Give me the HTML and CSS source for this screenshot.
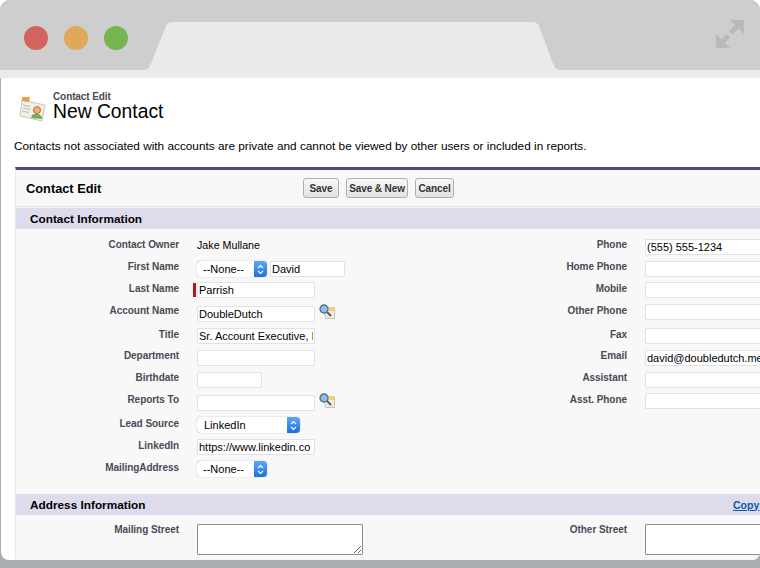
FILE: index.html
```html
<!DOCTYPE html>
<html lang="en">
    <head>
        <meta charset="UTF-8">
        <title>New Contact</title>
        <link rel="stylesheet" href="styles.css">
    </head>
    <body>
        <div class="window">
            <div class="chrome">
                <span class="dot dot-red"></span>
                <span class="dot dot-yellow"></span>
                <span class="dot dot-green"></span>
                <svg class="tab" width="418" height="48" viewBox="0 0 418 48">
                    <path d="M0 48Q5 48 7 44L23 4Q25 0 29 0L390 0Q394 0 396 4L411 44Q413 48 418 48Z" fill="#eaeaea"/>
                </svg>
                <svg class="expand" width="28" height="28" viewBox="0 0 28 28">
                    <path d="M14 0H28V14Z M0 14V28H14Z" fill="#b9b9b9"/>
                    <path d="M14.500 13L22 6M7 21L12.500 16" stroke="#b9b9b9" stroke-width="5"/>
                </svg>
            </div>
            <div class="strip"></div>
            <div class="page">
                <div class="page-title">
                    <svg class="contact-icon" width="28" height="28" viewBox="0 0 28 28">
                        <path d="M3 5L26 10L23 26L1 21Z" fill="#f1efe6" stroke="#c9c7bc"/>
                        <path d="M3 2L11 2L10 7L3 6Z" fill="#ee9a50"/>
                        <path d="M4 10L11 11.500M4 13L11 14.500M3 16L10 17.500" stroke="#b9bcc4"/>
                        <circle cx="18" cy="15" r="3.500" fill="#e9b27f" stroke="#c9682f"/>
                        <path d="M12 23Q13 18 18 19Q23 19 23 24Z" fill="#6fae5a"/>
                    </svg>
                    <div>
                        <h2>Contact Edit</h2>
                        <h1>New Contact</h1>
                    </div>
                </div>
                <p class="note">Contacts not associated with accounts are private and cannot be viewed by other users or included in reports.</p>

                <div class="panel">
                    <div class="panel-head">
                        <h3>Contact Edit</h3>
                        <div class="buttons">
                            <button class="btn-save">Save</button>
                            <button class="btn-new">Save &amp; New</button>
                            <button class="btn-cancel">Cancel</button>
                        </div>
                    </div>

                    <div class="section-bar"><h4>Contact Information</h4></div>
                    <div class="rows">
                        <div class="row row-low">
                            <label>Contact Owner</label>
                            <span class="plain">Jake Mullane</span>
                            <label>Phone</label>
                            <input class="w-full" type="text" value="(555) 555-1234">
                        </div>
                        <div class="row row-low">
                            <label>First Name</label>
                            <div class="field-group">
                                <div class="select w-salutation"><span>--None--</span><i class="stepper"><svg width="7" height="11" viewBox="0 0 7 11"><path d="M1 4L3.500 1.500L6 4M1 7L3.500 9.500L6 7" fill="none" stroke="#fff" stroke-width="1.200"/></svg></i></div>
                                <input class="w-first" type="text" value="David">
                            </div>
                            <label>Home Phone</label>
                            <input class="w-full" type="text">
                        </div>
                        <div class="row">
                            <label>Last Name</label>
                            <div class="required"><input class="w-text" type="text" value="Parrish"></div>
                            <label>Mobile</label>
                            <input class="w-full" type="text">
                        </div>
                        <div class="row row-lookup">
                            <label>Account Name</label>
                            <div class="field-group">
                                <input class="w-text" type="text" value="DoubleDutch">
                                <svg class="lookup" width="16" height="16" viewBox="0 0 16 16">
                                    <path d="M5.500 3.500H15.500V14.500H6.500Z" fill="#ecebe4" stroke="#c5c5bd"/>
                                    <path d="M10 3H15V7H10Z" fill="#f6d463"/>
                                    <path d="M7.500 7.500L12 12" stroke="#5f5b50" stroke-width="2"/>
                                    <circle cx="5" cy="5" r="4" fill="#8fbfe2" stroke="#4f6f8c" stroke-width="1.300"/>
                                </svg>
                            </div>
                            <label>Other Phone</label>
                            <input class="w-full shift-up" type="text">
                        </div>
                        <div class="row row-short">
                            <label>Title</label>
                            <input class="w-text" type="text" value="Sr. Account Executive, I">
                            <label>Fax</label>
                            <input class="w-full" type="text">
                        </div>
                        <div class="row row-low">
                            <label>Department</label>
                            <input class="w-text" type="text">
                            <label>Email</label>
                            <input class="w-full" type="text" value="david@doubledutch.me">
                        </div>
                        <div class="row row-low">
                            <label>Birthdate</label>
                            <input class="w-date" type="text">
                            <label>Assistant</label>
                            <input class="w-full" type="text">
                        </div>
                        <div class="row row-lookup">
                            <label>Reports To</label>
                            <div class="field-group">
                                <input class="w-text" type="text">
                                <svg class="lookup" width="16" height="16" viewBox="0 0 16 16">
                                    <path d="M5.500 3.500H15.500V14.500H6.500Z" fill="#ecebe4" stroke="#c5c5bd"/>
                                    <path d="M10 3H15V7H10Z" fill="#f6d463"/>
                                    <path d="M7.500 7.500L12 12" stroke="#5f5b50" stroke-width="2"/>
                                    <circle cx="5" cy="5" r="4" fill="#8fbfe2" stroke="#4f6f8c" stroke-width="1.300"/>
                                </svg>
                            </div>
                            <label>Asst. Phone</label>
                            <input class="w-full shift-up" type="text">
                        </div>
                        <div class="row">
                            <label>Lead Source</label>
                            <div class="select w-source"><span>LinkedIn</span><i class="stepper"><svg width="7" height="11" viewBox="0 0 7 11"><path d="M1 4L3.500 1.500L6 4M1 7L3.500 9.500L6 7" fill="none" stroke="#fff" stroke-width="1.200"/></svg></i></div>
                        </div>
                        <div class="row">
                            <label>LinkedIn</label>
                            <input class="w-text" type="text" value="https://www.linkedin.co">
                        </div>
                        <div class="row">
                            <label>MailingAddress</label>
                            <div class="select w-salutation"><span>--None--</span><i class="stepper"><svg width="7" height="11" viewBox="0 0 7 11"><path d="M1 4L3.500 1.500L6 4M1 7L3.500 9.500L6 7" fill="none" stroke="#fff" stroke-width="1.200"/></svg></i></div>
                        </div>
                    </div>

                    <div class="section-bar">
                        <h4>Address Information</h4>
                        <a href="#">Copy</a>
                    </div>
                    <div class="rows rows-address">
                        <div class="row row-street">
                            <label>Mailing Street</label>
                            <textarea></textarea>
                            <label>Other Street</label>
                            <textarea></textarea>
                        </div>
                    </div>
                </div>
            </div>
        </div>
    </body>
</html>
```

FILE: styles.css
```css
* {
    box-sizing: border-box;
    margin: 0;
}

html, body {
    width: 760px;
    height: 568px;
    overflow: hidden;
    background-color: #fff;
}

body {
    font-family: "Liberation Sans", Arial, sans-serif;
    color: #000;
}

.window {
    width: 760px;
    height: 568px;
    background-color: #aaadb0;
    border-radius: 10px 10px 0 0;
    overflow: hidden;
    display: flex;
    flex-direction: column;
}

/* browser frame */
.chrome {
    height: 70px;
    flex: none;
    background-color: #cecece;
    padding: 6px 16px 0 24px;
    display: flex;
    align-items: center;
}

.dot {
    width: 24px;
    height: 24px;
    border-radius: 50%;
    margin-right: 16px;
}

.dot-red { background-color: #d4635f; }
.dot-yellow { background-color: #dfa95a; }
.dot-green { background-color: #76b552; }

.tab {
    align-self: flex-end;
    margin-left: -1px;
}

.expand {
    align-self: flex-start;
    margin-left: auto;
    margin-top: 14px;
}

.strip {
    height: 8px;
    flex: none;
    background-color: #eaeaea;
}

.page {
    height: 482px;
    flex: none;
    margin-left: 1px;
    padding: 13px 0 0 14px;
    background-color: #fff;
    border-radius: 0 0 8px 8px;
    overflow: hidden;
}

/* page heading */
.page-title {
    display: flex;
    align-items: flex-start;
    padding-left: 4px;
}

.contact-icon {
    margin: 4px 6px 0 0;
}

h2 {
    font-size: 10px;
    line-height: 11px;
    font-weight: bold;
    color: #4a4a56;
    letter-spacing: -0.1px;
}

h1 {
    font-size: 19.300px;
    line-height: 20px;
    font-weight: normal;
}

.note {
    font-size: 11.800px;
    line-height: 14px;
    margin: 16px 0 0 -1px;
}

/* form panel */
.panel {
    width: 760px;
    height: 400px;
    margin-top: 14px;
    background-color: #f8f8f8;
    border-top: 3px solid #54488a;
    border-left: 1px solid #e9e9e9;
}

.panel-head {
    height: 37px;
    display: flex;
    align-items: center;
    padding-left: 10px;
    border-bottom: 1px solid #e6e6e6;
}

h3 {
    font-size: 12.800px;
    font-weight: bold;
    width: 277px;
}

.buttons {
    display: flex;
    gap: 7px;
}

button {
    height: 20px;
    padding: 0;
    font-family: inherit;
    font-size: 10px;
    font-weight: bold;
    letter-spacing: -0.1px;
    color: #333;
    background: linear-gradient(#f8f8f8, #e2e2e2);
    border: 1px solid #b0b0b0;
    border-radius: 3px;
}

.btn-save { width: 36px; }
.btn-new { width: 62px; }
.btn-cancel { width: 39px; }

.section-bar {
    height: 21px;
    margin-top: 1px;
    padding: 0 14px;
    background-color: #dedbec;
    display: flex;
    align-items: center;
    white-space: nowrap;
}

h4 {
    font-size: 11.800px;
    font-weight: bold;
    width: 703px;
    flex: none;
}

.section-bar a {
    font-size: 10.500px;
    font-weight: bold;
    color: #0a5ca8;
}

.rows {
    padding: 5px 0 14px;
}

.rows-address {
    padding-top: 4px;
}

.row {
    height: 22px;
    display: grid;
    grid-template-columns: 163px 200px 212px 1fr;
    column-gap: 18px;
    align-items: start;
}

.row-lookup { height: 24px; }
.row-short { height: 21px; }
.row-street { height: 40px; }

label {
    display: block;
    font-size: 10px;
    line-height: 22px;
    font-weight: bold;
    letter-spacing: -0.05px;
    color: #4a4a56;
    text-align: right;
}

.plain {
    font-size: 10.700px;
    line-height: 22px;
}

input {
    display: block;
    height: 16px;
    margin-top: 4px;
    padding: 0 1px;
    font-family: inherit;
    font-size: 11px;
    color: #000;
    background-color: #fff;
    border: 1px solid #e2e2e2;
    border-radius: 1px;
    outline: 0;
}

.row-low input, .row-low .select { margin-top: 5px; }
.row-lookup input { margin-top: 6px; }
.row-lookup .shift-up { margin-top: 4px; }

.w-text { width: 118px; }
.w-first { width: 75px; }
.w-date { width: 65px; }
.w-full { width: 120px; }

.field-group {
    display: flex;
    align-items: flex-start;
    gap: 3px;
}

.lookup {
    margin: 4px 0 0 1px;
}

.required {
    position: relative;
}

.required::before {
    content: "";
    position: absolute;
    left: -4px;
    top: 5px;
    width: 3px;
    height: 14px;
    background-color: #c00f1e;
}

.select {
    height: 16px;
    margin-top: 4px;
    display: flex;
    justify-content: space-between;
    align-items: center;
    font-size: 11px;
    padding-left: 6px;
    background-color: #fff;
    border-radius: 4px;
    box-shadow: 0 0 1px 0 rgba(0, 0, 0, 0.5);
}

.w-salutation { width: 70px; }
.w-source { width: 103px; }
.w-source span { padding-left: 1px; }

.stepper {
    width: 13px;
    height: 16px;
    flex: none;
    display: flex;
    align-items: center;
    justify-content: center;
    background: linear-gradient(#5ea9f4, #1a6fe0);
    border-radius: 0 4px 4px 0;
}

textarea {
    display: block;
    width: 166px;
    height: 31px;
    margin-top: 5px;
    background-color: #fff;
    border: 1px solid #8e8e8e;
    border-radius: 1px;
    outline: 0;
}
```
